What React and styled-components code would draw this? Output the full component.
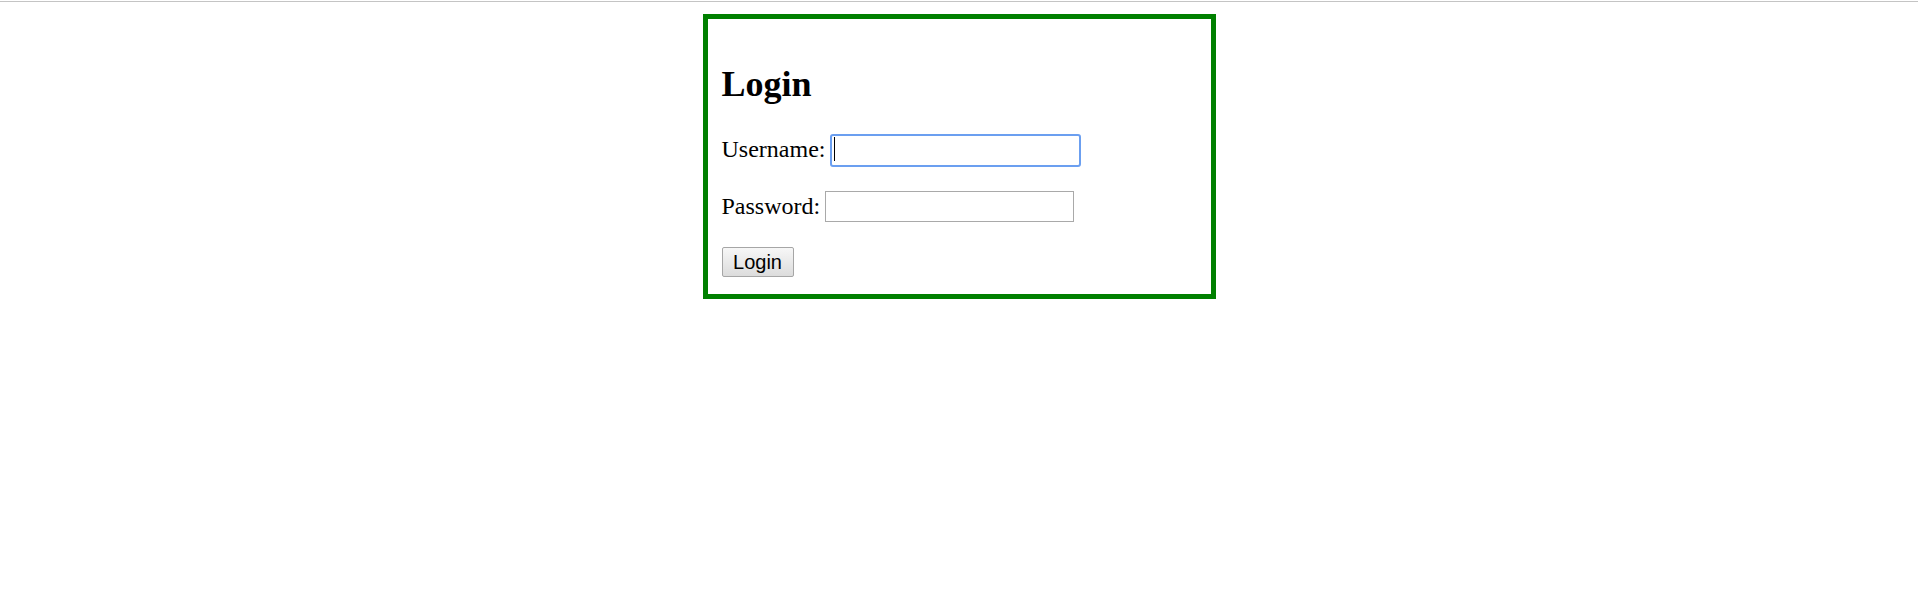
import React from 'react';
import styled, { createGlobalStyle } from 'styled-components';

const GlobalStyle = createGlobalStyle`
  body {
    margin: 0;
    background: #fff;
    font-family: 'Liberation Serif', 'Times New Roman', serif;
    color: #000;
  }
`;

const TopLine = styled.div`
  height: 1px;
  margin-top: 1px;
  background: #c4c4c4;
`;

const LoginBox = styled.form`
  box-sizing: border-box;
  width: 513px;
  margin: 12px auto 0;
  padding: 0 14px 17px;
  border: 5px solid #008000;
  display: flex;
  flex-direction: column;
  align-items: flex-start;
`;

const Title = styled.h2`
  margin: 47px 0 0;
  font-size: 36px;
  line-height: 36px;
  font-weight: 700;
`;

const Row = styled.div`
  display: flex;
  align-items: flex-start;
  gap: 5px;
  margin-top: ${(p) => p.$top}px;
`;

const Label = styled.label`
  margin-top: 3px;
  font-size: 24px;
  line-height: 24px;
  white-space: nowrap;
`;

const InputWrap = styled.div`
  position: relative;
  display: flex;
`;

const TextInput = styled.input`
  box-sizing: border-box;
  margin: 0;
  padding: 0 4px;
  width: ${(p) => (p.$focused ? 251 : 249)}px;
  height: ${(p) => (p.$focused ? 33 : 31)}px;
  border: ${(p) => (p.$focused ? '2px solid #6b9ff0' : '1px solid #a9a9a9')};
  border-radius: ${(p) => (p.$focused ? 3 : 0)}px;
  font-family: 'Liberation Sans', Arial, sans-serif;
  font-size: 20px;
  outline: none;
  background: #fff;
`;

const Caret = styled.span`
  position: absolute;
  left: 4px;
  top: 3px;
  width: 1px;
  height: 24px;
  background: #000;
`;

const SubmitButton = styled.button`
  box-sizing: border-box;
  margin-top: 25px;
  width: 72px;
  height: 30px;
  padding: 0;
  border: 1px solid #a6a6a6;
  border-radius: 2px;
  background: linear-gradient(#f7f7f7, #dcdcdc);
  font-family: 'Liberation Sans', Arial, sans-serif;
  font-size: 20px;
  color: #000;
`;

export default function App() {
  return (
    <>
      <GlobalStyle />
      <TopLine />
      <LoginBox onSubmit={(e) => e.preventDefault()}>
        <Title>Login</Title>
        <Row $top={32}>
          <Label htmlFor="username">Username:</Label>
          <InputWrap>
            <TextInput id="username" type="text" $focused />
            <Caret />
          </InputWrap>
        </Row>
        <Row $top={24}>
          <Label htmlFor="password">Password:</Label>
          <InputWrap>
            <TextInput id="password" type="password" />
          </InputWrap>
        </Row>
        <SubmitButton type="submit">Login</SubmitButton>
      </LoginBox>
    </>
  );
}
